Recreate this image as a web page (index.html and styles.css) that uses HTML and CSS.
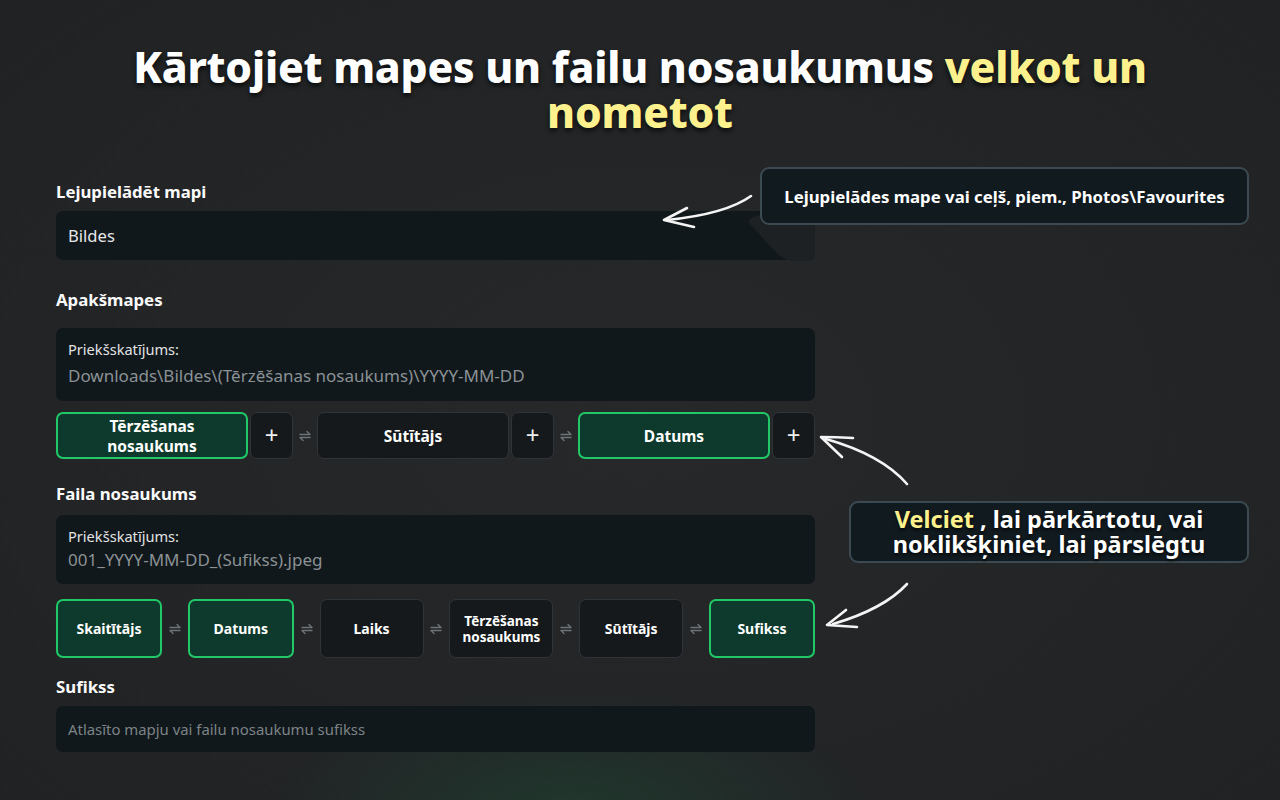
FILE: index.html
```html
<!DOCTYPE html>
<html lang="lv">
<head>
<meta charset="utf-8">
<title>Kārtojiet mapes</title>
<link rel="stylesheet" href="styles.css">
</head>
<body>
<div class="page">
  <h1 class="title">Kārtojiet mapes un failu nosaukumus <span class="hl">velkot un</span> <span class="hl">nometot</span></h1>

  <div class="form">
    <div class="label l1">Lejupielādēt mapi</div>
    <div class="input i1">Bildes</div>

    <div class="label l2">Apakšmapes</div>
    <div class="preview p1">
      <div class="pv-label">Priekšskatījums:</div>
      <div class="pv-path">Downloads\Bildes\(Tērzēšanas nosaukums)\YYYY-MM-DD</div>
    </div>
    <div class="row row1">
      <div class="chip on">Tērzēšanas<br>nosaukums</div>
      <div class="plus">+</div>
      <div class="swap"><svg viewBox="0 0 14 14" width="14" height="14"><path d="M2 5.5H12L9 2.5M12 8.5H2L5 11.5" fill="none" stroke="#6d7376" stroke-width="1.4" stroke-linecap="round" stroke-linejoin="round"/></svg></div>
      <div class="chip">Sūtītājs</div>
      <div class="plus">+</div>
      <div class="swap"><svg viewBox="0 0 14 14" width="14" height="14"><path d="M2 5.5H12L9 2.5M12 8.5H2L5 11.5" fill="none" stroke="#6d7376" stroke-width="1.4" stroke-linecap="round" stroke-linejoin="round"/></svg></div>
      <div class="chip on">Datums</div>
      <div class="plus">+</div>
    </div>

    <div class="label l3">Faila nosaukums</div>
    <div class="preview p2">
      <div class="pv-label">Priekšskatījums:</div>
      <div class="pv-path">001_YYYY-MM-DD_(Sufikss).jpeg</div>
    </div>
    <div class="row row2">
      <div class="chip sm on">Skaitītājs</div>
      <div class="swap"><svg viewBox="0 0 14 14" width="14" height="14"><path d="M2 5.5H12L9 2.5M12 8.5H2L5 11.5" fill="none" stroke="#6d7376" stroke-width="1.4" stroke-linecap="round" stroke-linejoin="round"/></svg></div>
      <div class="chip sm on">Datums</div>
      <div class="swap"><svg viewBox="0 0 14 14" width="14" height="14"><path d="M2 5.5H12L9 2.5M12 8.5H2L5 11.5" fill="none" stroke="#6d7376" stroke-width="1.4" stroke-linecap="round" stroke-linejoin="round"/></svg></div>
      <div class="chip sm">Laiks</div>
      <div class="swap"><svg viewBox="0 0 14 14" width="14" height="14"><path d="M2 5.5H12L9 2.5M12 8.5H2L5 11.5" fill="none" stroke="#6d7376" stroke-width="1.4" stroke-linecap="round" stroke-linejoin="round"/></svg></div>
      <div class="chip sm two">Tērzēšanas<br>nosaukums</div>
      <div class="swap"><svg viewBox="0 0 14 14" width="14" height="14"><path d="M2 5.5H12L9 2.5M12 8.5H2L5 11.5" fill="none" stroke="#6d7376" stroke-width="1.4" stroke-linecap="round" stroke-linejoin="round"/></svg></div>
      <div class="chip sm">Sūtītājs</div>
      <div class="swap"><svg viewBox="0 0 14 14" width="14" height="14"><path d="M2 5.5H12L9 2.5M12 8.5H2L5 11.5" fill="none" stroke="#6d7376" stroke-width="1.4" stroke-linecap="round" stroke-linejoin="round"/></svg></div>
      <div class="chip sm on">Sufikss</div>
    </div>

    <div class="label l4">Sufikss</div>
    <div class="input i2 placeholder">Atlasīto mapju vai failu nosaukumu sufikss</div>
  </div>

  <svg class="overlay" width="1280" height="800" viewBox="0 0 1280 800">
    <path d="M748 222 Q752 215 762 215 L815 215 L815 255 Q815 261 808 261 L790 261 Q780 258 772 248 Z" fill="#1d2124"/>
    <g fill="none" stroke="#f4f4f4" stroke-width="2.6" stroke-linecap="round" stroke-linejoin="round">
      <path d="M751 196 Q726 214 667 220"/>
      <path d="M687 208 L664 220 L694 227"/>
      <path d="M907 484 Q882 455 826 439"/>
      <path d="M853 438 Q836 437 821 437 L842 457"/>
      <path d="M907 584 Q884 609 833 624"/>
      <path d="M846 610 L827 625 Q843 626 857 627"/>
    </g>
  </svg>

  <div class="tip tip1"><p class="tip-text">Lejupielādes mape vai ceļš, piem., Photos\Favourites</p></div>
  <div class="tip tip2"><p class="tip-text"><span class="hl">Velciet</span> , lai pārkārtotu, vai noklikšķiniet, lai pārslēgtu</p></div>
</div>
</body>
</html>
```

FILE: styles.css
```css
* { box-sizing: border-box; }
html, body {
  margin: 0;
  padding: 0;
  width: 1280px;
  height: 800px;
  overflow: hidden;
}
body {
  font-family: "Noto Sans", "Open Sans", sans-serif;
  color: #fff;
  background:
    radial-gradient(ellipse 300px 120px at 570px 810px, rgba(30, 70, 50, 0.55), rgba(30, 70, 50, 0) 100%),
    radial-gradient(ellipse 900px 600px at 640px 420px, #26282a, #202224 100%);
}
.page {
  position: relative;
  width: 1280px;
  height: 800px;
  padding-top: 44px;
}
.title {
  margin: 0 auto;
  width: 1080px;
  text-align: center;
  font-size: 42.5px;
  line-height: 45px;
  font-weight: 800;
  letter-spacing: -0.2px;
  color: #fff;
  text-shadow: 0 3px 5px rgba(0, 0, 0, 0.7);
}
.hl { color: #fdf18e; }

.form {
  margin-left: 56px;
  width: 759px;
  margin-top: 47px;
}
.label {
  font-size: 16.8px;
  line-height: 22px;
  font-weight: 700;
  color: #fafafa;
}
.l2 { margin-top: 29px; }
.l3 { margin-top: 24px; }
.l4 { margin-top: 18px; }

.input {
  background: #10181c;
  border-radius: 7px;
  padding-left: 12px;
  display: flex;
  align-items: center;
  font-size: 16.6px;
  color: #e6e6e6;
}
.i1 { margin-top: 8px; height: 49px; }
.i2 { margin-top: 8px; height: 46px; }
.placeholder { color: #7d8386; font-size: 14.9px; }

.preview {
  background: #10181c;
  border-radius: 7px;
  padding: 11px 12px 0;
}
.p1 { margin-top: 17px; height: 73px; }
.p2 { margin-top: 10px; height: 69px; }
.pv-label {
  font-size: 14.6px;
  line-height: 20px;
  color: #e3e3e3;
}
.pv-path {
  margin-top: 5px;
  font-size: 17px;
  line-height: 24px;
  color: #8b9194;
}
.p2 .pv-path { margin-top: 2px; }

.row {
  display: flex;
  align-items: stretch;
}
.row1 { margin-top: 11px; height: 47px; }
.row2 { margin-top: 15px; height: 59px; }

.chip {
  flex: 1;
  display: flex;
  align-items: center;
  justify-content: center;
  text-align: center;
  background: #15191c;
  border: 1px solid #2e3438;
  border-radius: 7px;
  font-weight: 700;
  font-size: 15.5px;
  line-height: 20px;
  color: #fff;
}
.chip.on {
  background: #0d3a2c;
  border: 2px solid #22c767;
}
.chip.sm { font-size: 14px; }
.chip.two { font-size: 13.5px; line-height: 16px; }
.row1 .chip { flex: 0 0 192px; }
.plus {
  flex: 0 0 43px;
  margin-left: 2px;
  display: flex;
  align-items: center;
  justify-content: center;
  background: #15191c;
  border: 1px solid #2e3438;
  border-radius: 7px;
  font-size: 24px;
  font-weight: 400;
  color: #eee;
  padding-bottom: 2px;
}
.swap {
  flex: 0 0 24px;
  display: flex;
  align-items: center;
  justify-content: center;
}
.row2 .swap { flex: 0 0 25.8px; }

.overlay {
  position: absolute;
  left: 0;
  top: 0;
  pointer-events: none;
}
.tip {
  position: absolute;
  background: #111a1f;
  border: 2px solid #3b4a51;
  border-radius: 9px;
  display: flex;
  align-items: center;
  justify-content: center;
  text-align: center;
  color: #fff;
  font-weight: 700;
}
.tip-text { margin: 0; }
.tip1 {
  left: 760px;
  top: 167px;
  width: 489px;
  height: 58px;
  font-size: 16.8px;
}
.tip2 {
  left: 849px;
  top: 501px;
  width: 400px;
  height: 62px;
  font-size: 23.5px;
  line-height: 25px;
  padding: 0 30px;
  text-shadow: 0 2px 3px rgba(0, 0, 0, 0.7);
}
```
